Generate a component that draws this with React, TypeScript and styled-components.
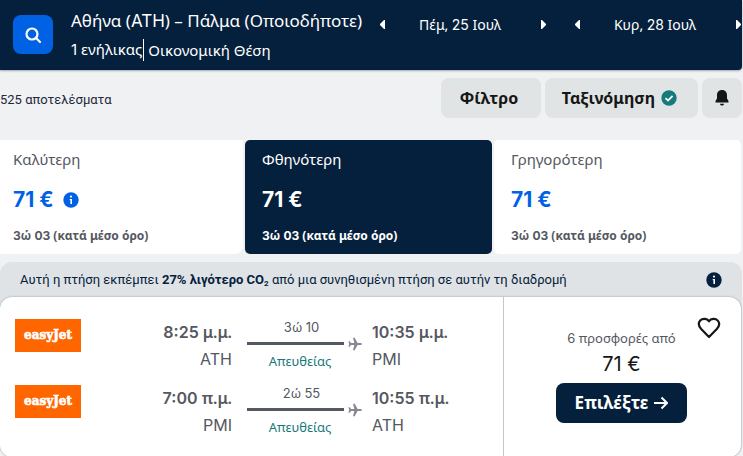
import React from "react";
import styled, { createGlobalStyle } from "styled-components";

const navy = "#05203c";
const blue = "#0062e3";
const greyText = "#545860";
const teal = "#167a7c";

const GlobalStyle = createGlobalStyle`
  * { box-sizing: border-box; }
  body {
    margin: 0;
    background: #eff1f2;
    color: #161616;
    font-family: "Noto Sans", "Open Sans", sans-serif;
    overflow: hidden;
  }
  button { font: inherit; border: 0; padding: 0; cursor: pointer; }
  svg { display: block; flex: none; }
`;

const LatinRun = styled.span`
  font-family: Inter, "Liberation Sans", sans-serif;
`;

/* Digits and Latin capitals use a grotesque face, Greek stays in Noto Sans. */
function Mixed({ children }: { children: string }) {
  return (
    <>
      {children.split(/([0-9A-Z€%:]+)/).map((part, i) =>
        i % 2 ? <LatinRun key={i}>{part}</LatinRun> : part
      )}
    </>
  );
}

const Page = styled.main`
  padding-right: 1px;
`;

const Header = styled.header`
  display: flex;
  height: 70px;
  padding-left: 13px;
  background: ${navy};
  color: #fff;
  border-radius: 0 0 4px 0;
  box-shadow: 0 1px 2px #05203c55;
  overflow: hidden;
`;

const SearchButton = styled.button`
  display: grid;
  place-items: center;
  flex: none;
  width: 40px;
  height: 39px;
  margin-top: 15px;
  border-radius: 8px;
  background: ${blue};
  color: #fff;
`;

const Trip = styled.div`
  flex: 1;
  margin-left: 18px;
  padding-top: 9px;
  white-space: nowrap;
`;

const Route = styled.h1`
  margin: 0;
  font-size: 17px;
  line-height: 24px;
  font-weight: 400;
`;

const TripMeta = styled.div`
  display: flex;
  align-items: center;
  margin-top: 5px;
  font-size: 15px;
  line-height: 22px;
`;

const Cabin = styled.span`
  margin-left: 1px;
  padding-left: 4px;
  border-left: 1px solid #fff;
`;

const Dates = styled.nav`
  display: flex;
  flex: none;
  gap: 27px;
  padding-top: 12px;
`;

const DatePicker = styled.div`
  display: flex;
  align-items: center;
  width: 168px;
  height: 24px;
  font-size: 14px;
`;

const DateLabel = styled.span`
  flex: 1;
  padding-right: 6px;
  text-align: center;
`;

const ArrowButton = styled.button`
  background: none;
  color: #fff;
`;

const Toolbar = styled.div`
  display: flex;
  align-items: center;
  gap: 4px;
  padding-top: 8px;
`;

const Results = styled.div`
  margin-right: auto;
  padding-top: 4px;
  white-space: nowrap;
  color: #23273c;
  font-family: Roboto, sans-serif;
  font-size: 13px;
  line-height: 20px;
`;

const ToolButton = styled.button<{ $width: number }>`
  display: flex;
  align-items: center;
  justify-content: center;
  gap: 6px;
  width: ${(p) => p.$width}px;
  height: 40px;
  padding-right: 4px;
  border-radius: 8px;
  background: #e0e4e5;
  color: #161616;
  font-size: 16px;
  font-weight: 700;
`;

const BellButton = styled(ToolButton)`
  padding-right: 0;
`;

const Tabs = styled.div`
  display: grid;
  grid-template-columns: 243fr 247fr 247fr;
  gap: 2px;
  margin-top: 22px;
  padding-right: 1px;
`;

const Tab = styled.button<{ $active?: boolean; $first?: boolean }>`
  display: flex;
  flex-direction: column;
  height: 114px;
  padding: 9px 0 0 ${(p) => (p.$first ? 13 : 17)}px;
  border-radius: ${(p) => (p.$first ? "0 0 8px 0" : "5px")};
  background: ${(p) => (p.$active ? navy : "#fff")};
  color: ${(p) => (p.$active ? "#fff" : greyText)};
  text-align: left;
`;

const TabName = styled.span`
  font-size: 15px;
  line-height: 20px;
`;

const TabPrice = styled.span<{ $active?: boolean }>`
  display: flex;
  align-items: center;
  gap: 9px;
  margin-top: 17px;
  color: ${(p) => (p.$active ? "#fff" : blue)};
  font-family: Inter, sans-serif;
  font-size: 21px;
  font-weight: 700;
  line-height: 28px;
`;

const TabDuration = styled.span`
  margin-top: 12px;
  font-size: 12px;
  font-weight: 700;
  line-height: 20px;
`;

const Ticket = styled.section`
  margin-top: 8px;
  border-radius: 12px;
  background: #dfe3e6;
`;

const EcoNote = styled.div`
  display: flex;
  align-items: center;
  justify-content: space-between;
  height: 35px;
  padding: 0 20px;
  color: ${navy};
  font-family: Roboto, sans-serif;
  font-size: 13px;
  white-space: nowrap;

  sub { font-size: 8px; line-height: 0; vertical-align: -2px; }
`;

const Card = styled.div`
  display: flex;
  height: 160px;
  margin-right: 1px;
  border-radius: 12px;
  background: #fff;
  box-shadow: 0 0 2px #05203c66;
`;

const Legs = styled.div`
  flex: 1;
  padding-top: 22px;
`;

const Leg = styled.div`
  display: grid;
  grid-template-columns: 66px 151px 140px 1fr;
  height: 66px;
  margin-left: 15px;
  color: ${greyText};
`;

const Airline = styled.div`
  height: 33px;
  background: #ff6600;
`;

const Stop = styled.div<{ $end?: boolean }>`
  text-align: ${(p) => (p.$end ? "right" : "left")};
  font-size: 16px;
  line-height: 27px;

  strong { display: block; font-weight: 600; }
`;

const Path = styled.div`
  display: grid;
  grid-template-columns: 97px 14px;
  column-gap: 4px;
  align-content: start;
  margin-left: 15px;
  color: #868991;
  font-size: 13px;
  text-align: center;
`;

const Duration = styled.span`
  grid-column: 1;
  padding-left: 12px;
  line-height: 17px;
  color: ${greyText};
`;

const Track = styled.span`
  grid-column: 1 / -1;
  display: flex;
  align-items: center;
  gap: 4px;
  height: 15px;
`;

const Line = styled.span`
  width: 97px;
  height: 3px;
  background: ${greyText};
`;

const Direct = styled.span`
  grid-column: 1;
  padding-left: 9px;
  line-height: 20px;
  color: ${teal};
`;

const Offer = styled.div`
  position: relative;
  display: flex;
  flex-direction: column;
  align-items: center;
  width: 238px;
  padding: 31px 2px 0 0;
  border-left: 1px solid #c1c7cf;
  color: ${greyText};
  font-size: 13px;
  line-height: 20px;
`;

const SaveButton = styled.button`
  position: absolute;
  top: 20px;
  right: 20px;
  background: none;
  color: #161616;
`;

const OfferPrice = styled.span`
  margin-top: 2px;
  color: #161616;
  font-family: Inter, sans-serif;
  font-size: 20px;
  line-height: 28px;
`;

const SelectButton = styled.button`
  display: flex;
  align-items: center;
  justify-content: center;
  gap: 6px;
  width: 131px;
  height: 40px;
  margin-top: 5px;
  border-radius: 8px;
  background: ${navy};
  color: #fff;
  font-size: 17px;
  font-weight: 700;
`;

function Triangle({ right }: { right?: boolean }) {
  return (
    <svg width="7" height="9" viewBox="0 0 7 9" fill="currentColor">
      <path d={right ? "M1 0h1l4 4v1L2 9H1z" : "M6 0H5L1 4v1l4 4h1z"} />
    </svg>
  );
}

function InfoIcon() {
  return (
    <svg width="16" height="16" viewBox="0 0 16 16">
      <circle cx="8" cy="8" r="7.7" fill="currentColor" />
      <circle cx="8" cy="4.6" r="1.1" fill="#fff" />
      <path d="M6.7 7H9v5H7.4V8.3h-.7z" fill="#fff" />
    </svg>
  );
}

function DateStepper({ label }: { label: string }) {
  return (
    <DatePicker>
      <ArrowButton aria-label="Προηγούμενη ημέρα"><Triangle /></ArrowButton>
      <DateLabel><Mixed>{label}</Mixed></DateLabel>
      <ArrowButton aria-label="Επόμενη ημέρα"><Triangle right /></ArrowButton>
    </DatePicker>
  );
}

function EasyJetLogo() {
  return (
    <svg width="66" height="33" viewBox="0 0 66 33" role="img" aria-label="easyJet">
      <text x="33" y="20" textAnchor="middle" fill="#fff" stroke="#fff" strokeWidth="0.6"
        fontFamily="'DejaVu Serif', serif" fontWeight="700" fontSize="12">easyJet</text>
    </svg>
  );
}

function Plane() {
  return (
    <svg width="14" height="14" viewBox="0 0 14 14" fill="currentColor">
      <path d="M5 .8h1.700L9.600 6H12.500c.8 0 1.300.4 1.300 1s-.5 1-1.300 1H9.600L6.700 13.200H5L6.300 8H3L1.700 9.700H.4L1.200 7 .4 4.300h1.300L3 6h3.300z" />
    </svg>
  );
}

const tabs = [
  { name: "Καλύτερη", info: true },
  { name: "Φθηνότερη", active: true },
  { name: "Γρηγορότερη" },
];

const legs = [
  { dep: "8:25 μ.μ.", from: "ATH", time: "3ώ 10", arr: "10:35 μ.μ.", to: "PMI" },
  { dep: "7:00 π.μ.", from: "PMI", time: "2ώ 55", arr: "10:55 π.μ.", to: "ATH" },
];

export default function App() {
  return (
    <Page>
      <GlobalStyle />
      <Header>
        <SearchButton aria-label="Αναζήτηση">
          <svg width="18" height="18" viewBox="0 0 18 18" fill="none" stroke="currentColor" strokeWidth="2.2">
            <circle cx="8" cy="8" r="5.500" />
            <path d="M12 12l4 4" strokeLinecap="round" />
          </svg>
        </SearchButton>
        <Trip>
          <Route><Mixed>Αθήνα (ATH) – Πάλμα (Οποιοδήποτε)</Mixed></Route>
          <TripMeta>
            <span><Mixed>1 ενήλικας</Mixed></span>
            <Cabin>Οικονομική Θέση</Cabin>
          </TripMeta>
        </Trip>
        <Dates>
          <DateStepper label="Πέμ, 25 Ιουλ" />
          <DateStepper label="Κυρ, 28 Ιουλ" />
        </Dates>
      </Header>

      <Toolbar>
        <Results>525 αποτελέσματα</Results>
        <ToolButton $width={100}>Φίλτρο</ToolButton>
        <ToolButton $width={153}>
          Ταξινόμηση
          <svg width="16" height="16" viewBox="0 0 16 16">
            <circle cx="8" cy="8" r="7.700" fill={teal} />
            <path d="M4.500 8.200L7 10.600l4.600-4.800" fill="none" stroke="#fff" strokeWidth="1.800" />
          </svg>
        </ToolButton>
        <BellButton $width={40} aria-label="Ειδοποιήσεις τιμών">
          <svg width="14" height="16" viewBox="0 0 14 16" fill="currentColor">
            <path d="M7 0C3.800 0 2 2.200 2 5v3.500L.5 11v1.500h13V11L12 8.500V5c0-2.800-1.800-5-5-5zM5 13.700h4c0 1-.8 1.800-2 1.800s-2-.8-2-1.800z" />
          </svg>
        </BellButton>
      </Toolbar>

      <Tabs>
        {tabs.map((t) => (
          <Tab key={t.name} $active={t.active} $first={t.info} aria-pressed={!!t.active}>
            <TabName>{t.name}</TabName>
            <TabPrice $active={t.active}>71 €{t.info && <InfoIcon />}</TabPrice>
            <TabDuration><Mixed>3ώ 03 (κατά μέσο όρο)</Mixed></TabDuration>
          </Tab>
        ))}
      </Tabs>

      <Ticket>
        <EcoNote>
          <span>
            Αυτή η πτήση εκπέμπει{" "}
            <strong>27% λιγότερο CO<sub>2</sub></strong>{" "}
            από μια συνηθισμένη πτήση σε αυτήν τη διαδρομή
          </span>
          <InfoIcon />
        </EcoNote>
        <Card>
          <Legs>
            {legs.map((l) => (
              <Leg key={l.dep}>
                <Airline><EasyJetLogo /></Airline>
                <Stop $end>
                  <strong><Mixed>{l.dep}</Mixed></strong>
                  <Mixed>{l.from}</Mixed>
                </Stop>
                <Path>
                  <Duration><Mixed>{l.time}</Mixed></Duration>
                  <Track>
                    <Line />
                    <Plane />
                  </Track>
                  <Direct>Απευθείας</Direct>
                </Path>
                <Stop>
                  <strong><Mixed>{l.arr}</Mixed></strong>
                  <Mixed>{l.to}</Mixed>
                </Stop>
              </Leg>
            ))}
          </Legs>
          <Offer>
            <SaveButton aria-label="Αποθήκευση">
              <svg width="24" height="22" viewBox="0 0 24 22" fill="none" stroke="currentColor" strokeWidth="2.200" strokeLinejoin="round">
                <path d="M12 4.300C10.200 1.200 5.500 1 3.200 3.600 1 6.200 2 9.600 4.200 12L12 20l7.800-8c2.200-2.400 3.200-5.800 1-8.400C18.500 1 13.800 1.200 12 4.300z" />
              </svg>
            </SaveButton>
            <span><Mixed>6 προσφορές από</Mixed></span>
            <OfferPrice>71 €</OfferPrice>
            <SelectButton>
              Επιλέξτε
              <svg width="14" height="14" viewBox="0 0 14 14" fill="none" stroke="currentColor" strokeWidth="2">
                <path d="M0 7h12M7.500 1.500L13 7l-5.500 5.500" />
              </svg>
            </SelectButton>
          </Offer>
        </Card>
      </Ticket>
    </Page>
  );
}
